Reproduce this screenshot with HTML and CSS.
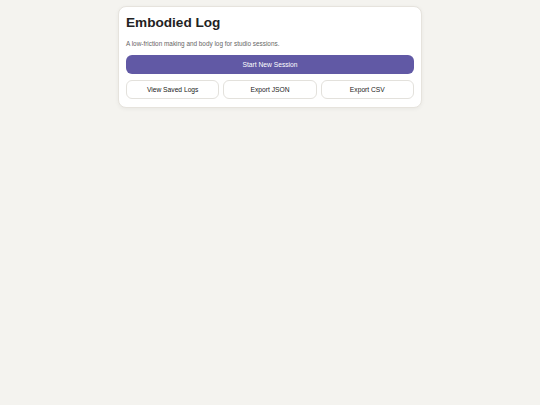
FILE: index.html
```html
<!DOCTYPE html>
<html>
<head>
<meta charset="utf-8">
<link rel="stylesheet" href="styles.css">
</head>
<body>
<main class="wrap">
  <section class="card">
    <h1 class="title">Embodied Log</h1>
    <p class="subtitle">A low-friction making and body log for studio sessions.</p>
    <button class="btn btn-primary">Start New Session</button>
    <div class="row">
      <button class="btn btn-secondary">View Saved Logs</button>
      <button class="btn btn-secondary">Export JSON</button>
      <button class="btn btn-secondary">Export CSV</button>
    </div>
  </section>
</main>
</body>
</html>
```

FILE: styles.css
```css
html, body {
  margin: 0;
  padding: 0;
}
body {
  background: #f4f3ef;
  font-family: "Liberation Sans", Arial, sans-serif;
  color: #222;
  width: 540px;
  height: 405px;
}
.wrap {
  width: 304px;
  margin: 6px auto 0;
}
.card {
  background: #fff;
  border: 1px solid #e6e3dd;
  border-radius: 8px;
  box-shadow: 0 1px 4px rgba(0, 0, 0, 0.05);
  padding: 7px 7px 8px;
  display: flex;
  flex-direction: column;
}
.title {
  font-size: 13.6px;
  font-weight: 700;
  line-height: 17px;
  margin: 0;
  color: #222;
}
.subtitle {
  font-size: 6.4px;
  line-height: 8px;
  color: #666;
  margin: 9px 0 7px;
}
.btn {
  font-family: "Liberation Sans", Arial, sans-serif;
  font-size: 6.7px;
  height: 19px;
  border-radius: 6px;
  padding: 0;
  cursor: pointer;
}
.btn-primary {
  background: #6159a5;
  color: #fff;
  border: none;
  width: 100%;
}
.row {
  display: grid;
  grid-template-columns: 1fr 1fr 1fr;
  gap: 4px;
  margin-top: 6px;
}
.btn-secondary {
  background: #fff;
  color: #222;
  border: 1px solid #e3e1dc;
  height: 19px;
}
```
